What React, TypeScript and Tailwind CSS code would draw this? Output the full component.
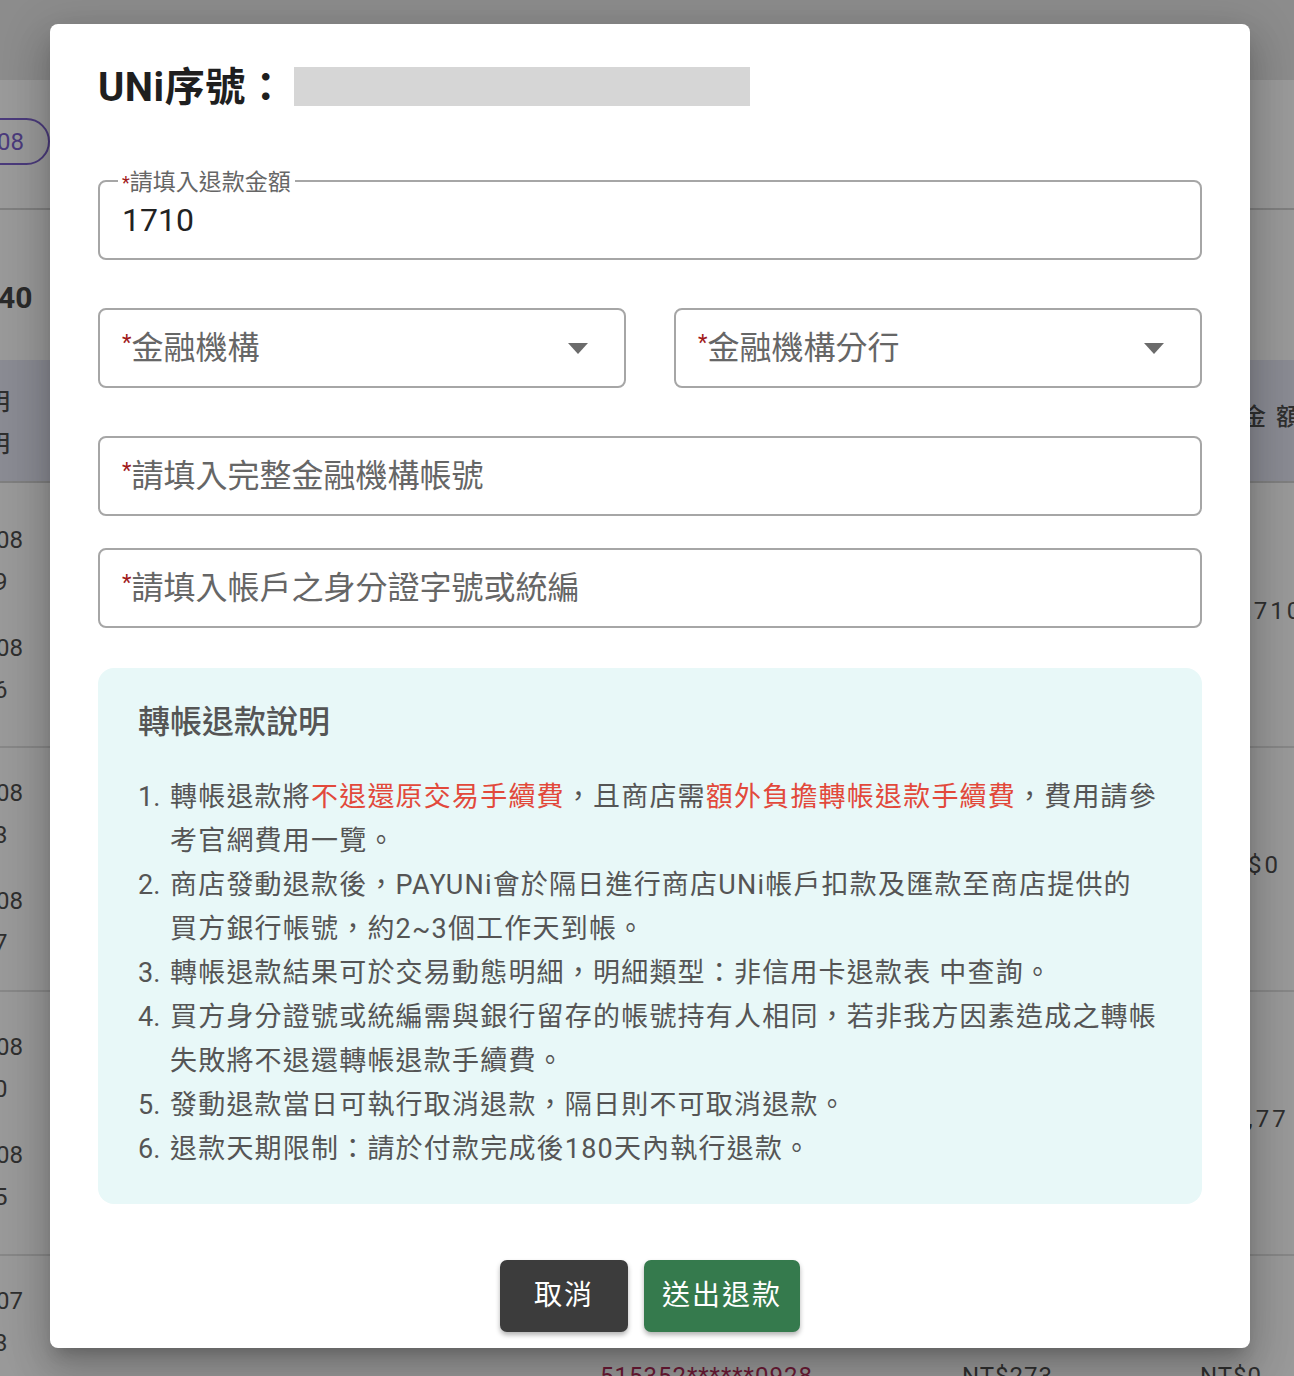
import { ReactNode } from 'react';

const FONT = "font-['Roboto','Noto_Sans_CJK_TC',sans-serif]";

// dimmed page behind the dialog
function BgCell({ lines, className = '' }: { lines: [string, number][]; className?: string }) {
  return (
    <div className={`flex flex-col ${className}`}>
      {lines.map(([t, off], i) => (
        <span key={i} className="h-[42px] leading-[42px] whitespace-nowrap" style={{ marginLeft: off }}>
          {t}
        </span>
      ))}
    </div>
  );
}

function Background() {
  return (
    <div className="flex flex-col w-full h-[1376px] overflow-hidden bg-[#8f8f8f] text-[24px] text-[#2f2f2f]">
      <div className="h-[80px] shrink-0 bg-[#8c8c8c]" />
      <div className="h-[130px] shrink-0 bg-[#9a9a9a] border-b-2 border-[#7f7f7f] pt-[38px]">
        <div className="ml-[-40px] w-[90px] h-[47px] rounded-full border-2 border-[#4b3b7c] text-[#4b3b7c] flex items-center justify-end pr-[24px]">
          08
        </div>
      </div>
      <div className="h-[150px] shrink-0 bg-[#999999] pt-[68px]">
        <span className="ml-[-2px] text-[30px] font-bold leading-[40px] text-[#2a2a2a]">40</span>
      </div>
      <div className="h-[123px] shrink-0 bg-[#8a8b93] border-b-2 border-[#7f7f7f] flex justify-between">
        <BgCell lines={[['明', -14], ['明', -14]]} className="pt-[21px] font-medium" />
        <div className="w-[52px] pt-[39px] whitespace-nowrap font-medium tracking-[2px]">金 額</div>
      </div>
      <div className="h-[265px] shrink-0 bg-[#999999] border-b-2 border-[#878787] flex justify-between">
        <div className="flex flex-col pt-[36px] gap-[24px]">
          <BgCell lines={[['08', -4], ['9', -6]]} />
          <BgCell lines={[['08', -4], ['6', -6]]} />
        </div>
        <div className="w-[48px] pt-[110px] tracking-[3px] whitespace-nowrap">,710</div>
      </div>
      <div className="h-[244px] shrink-0 bg-[#999999] border-b-2 border-[#878787] flex justify-between">
        <div className="flex flex-col pt-[24px] gap-[24px]">
          <BgCell lines={[['08', -4], ['3', -6]]} />
          <BgCell lines={[['08', -4], ['7', -6]]} />
        </div>
        <div className="w-[46px] pt-[99px] tracking-[3px] whitespace-nowrap">$0</div>
      </div>
      <div className="h-[264px] shrink-0 bg-[#999999] border-b-2 border-[#878787] flex justify-between">
        <div className="flex flex-col pt-[34px] gap-[24px]">
          <BgCell lines={[['08', -4], ['0', -6]]} />
          <BgCell lines={[['08', -4], ['5', -6]]} />
        </div>
        <div className="w-[46px] pt-[109px] tracking-[3px] whitespace-nowrap">,77</div>
      </div>
      <div className="flex-1 bg-[#999999] flex">
        <BgCell lines={[['07', -4], ['3', -6]]} className="pt-[24px] w-[50px]" />
        <div className="flex-1 flex items-end">
          <div className="ml-[550px] translate-y-[18px] flex">
            <span className="w-[362px] text-[#6b1a35] tracking-[1px]">515352******0928</span>
            <span className="w-[238px] tracking-[1px]">NT$273</span>
            <span className="tracking-[1px]">NT$0</span>
          </div>
        </div>
      </div>
    </div>
  );
}

function Req() {
  return <span className="text-[#a11a1a] text-[22px] align-top leading-none">*</span>;
}

function OutlinedBox({ children, className = '' }: { children: ReactNode; className?: string }) {
  return (
    <div className={`h-[80px] rounded-[8px] border-2 border-[#a6a6a6] flex items-center pl-[22px] pr-[36px] ${className}`}>
      {children}
    </div>
  );
}

function SelectBox({ label }: { label: string }) {
  return (
    <OutlinedBox className="flex-1 justify-between">
      <span className="text-[32px] text-[#666] leading-none">
        <Req />
        {label}
      </span>
      <svg width="20" height="11" viewBox="0 0 20 11">
        <path d="M0 0h20L10 11z" fill="#6b6b6b" />
      </svg>
    </OutlinedBox>
  );
}

function TextBox({ label }: { label: string }) {
  return (
    <OutlinedBox>
      <span className="text-[32px] text-[#666] leading-none">
        <Req />
        {label}
      </span>
    </OutlinedBox>
  );
}

const notes: ReactNode[] = [
  <>
    轉帳退款將<span className="text-[#e2493b]">不退還原交易手續費</span>，且商店需
    <span className="text-[#e2493b]">額外負擔轉帳退款手續費</span>，費用請參考官網費用一覽。
  </>,
  <>
    商店發動退款後，PAYUNi會於隔日進行商店UNi帳戶扣款及匯款至商店提供的
    <br />
    買方銀行帳號，約2~3個工作天到帳。
  </>,
  <>轉帳退款結果可於交易動態明細，明細類型：非信用卡退款表 中查詢。</>,
  <>買方身分證號或統編需與銀行留存的帳號持有人相同，若非我方因素造成之轉帳失敗將不退還轉帳退款手續費。</>,
  <>發動退款當日可執行取消退款，隔日則不可取消退款。</>,
  <>退款天期限制：請於付款完成後180天內執行退款。</>,
];

export default function App() {
  return (
    <div className={`relative w-full h-[1376px] overflow-hidden ${FONT}`}>
      <Background />

      {/* Dialog */}
      <div className="absolute left-[50px] top-[24px] w-[1200px] h-[1324px] bg-white rounded-[8px] px-12 pt-[41px] flex flex-col shadow-[0_11px_15px_-7px_rgba(0,0,0,0.2),0_24px_38px_3px_rgba(0,0,0,0.14),0_9px_46px_8px_rgba(0,0,0,0.12)]">
        <div className="h-[46px] flex items-center">
          <h2 className="text-[40px] font-bold text-[#1f1f1f] leading-none tracking-[0.5px]">UNi序號：</h2>
          <div className="ml-[8px] w-[456px] h-[39px] bg-[#d6d6d6] mt-[-4px]" />
        </div>

        {/* Amount */}
        <div className="relative mt-[69px] h-[80px] rounded-[8px] border-2 border-[#a6a6a6] flex items-center pl-[22px]">
          <span className="absolute left-[18px] top-[-13px] bg-white px-[4px] text-[23px] leading-[28px] text-[#666]">
            <span className="text-[#a11a1a] text-[18px] align-top">*</span>請填入退款金額
          </span>
          <span className="text-[32px] text-[#222] leading-none">1710</span>
        </div>

        <div className="mt-[48px] flex gap-[48px]">
          <SelectBox label="金融機構" />
          <SelectBox label="金融機構分行" />
        </div>

        <div className="mt-[48px]">
          <TextBox label="請填入完整金融機構帳號" />
        </div>
        <div className="mt-[32px]">
          <TextBox label="請填入帳戶之身分證字號或統編" />
        </div>

        {/* Notes */}
        <div className="mt-[40px] h-[536px] rounded-[16px] bg-[#e8f8f8] px-[40px] pt-[33px] text-[#555]">
          <h3 className="text-[32px] leading-[42px] font-medium">轉帳退款說明</h3>
          <ol className="mt-[32px] text-[27px] leading-[44px] tracking-[1.2px] pr-[2px]">
            {notes.map((n, i) => (
              <li key={i} className="flex">
                <span className="w-[32px] shrink-0 tracking-normal">{i + 1}.</span>
                <span>{n}</span>
              </li>
            ))}
          </ol>
        </div>

        {/* Actions */}
        <div className="mt-[56px] flex justify-center gap-[16px]">
          <button className="w-[128px] h-[72px] rounded-[7px] bg-[#3c3c3c] text-white text-[28px] tracking-[2px] shadow-[0_3px_5px_rgba(0,0,0,0.3)]">
            取消
          </button>
          <button className="w-[156px] h-[72px] rounded-[7px] bg-[#357a4d] text-white text-[28px] tracking-[2px] shadow-[0_3px_5px_rgba(0,0,0,0.3)]">
            送出退款
          </button>
        </div>
      </div>
    </div>
  );
}
